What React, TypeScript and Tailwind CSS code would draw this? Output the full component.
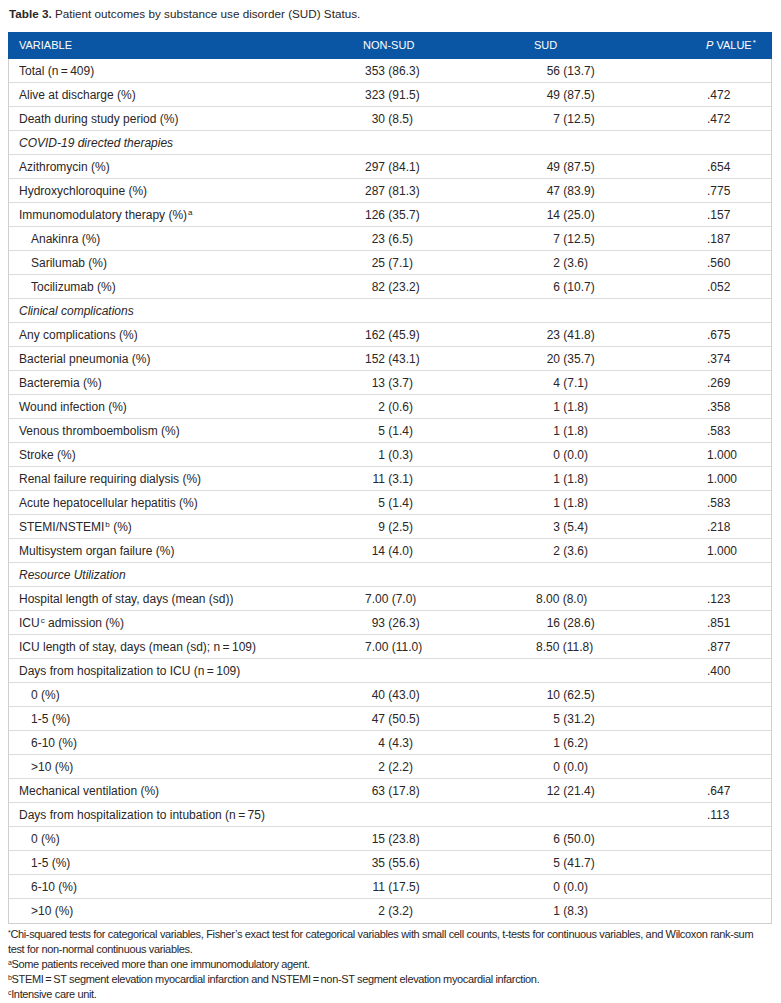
import React from 'react';

type Row =
  | { kind: 'section'; label: string }
  | {
      kind: 'data';
      label: React.ReactNode;
      indent?: boolean;
      non?: [string, string] | string;
      sud?: [string, string] | string;
      p?: string;
    };

const rows: Row[] = [
  { kind: 'data', label: 'Total (n\u2009=\u2009409)', non: ['353', '(86.3)'], sud: ['56', '(13.7)'] },
  { kind: 'data', label: 'Alive at discharge (%)', non: ['323', '(91.5)'], sud: ['49', '(87.5)'], p: '.472' },
  { kind: 'data', label: 'Death during study period (%)', non: ['30', '(8.5)'], sud: ['7', '(12.5)'], p: '.472' },
  { kind: 'section', label: 'COVID-19 directed therapies' },
  { kind: 'data', label: 'Azithromycin (%)', non: ['297', '(84.1)'], sud: ['49', '(87.5)'], p: '.654' },
  { kind: 'data', label: 'Hydroxychloroquine (%)', non: ['287', '(81.3)'], sud: ['47', '(83.9)'], p: '.775' },
  {
    kind: 'data',
    label: (
      <>
        Immunomodulatory therapy (%)<Sup>a</Sup>
      </>
    ),
    non: ['126', '(35.7)'],
    sud: ['14', '(25.0)'],
    p: '.157',
  },
  { kind: 'data', indent: true, label: 'Anakinra (%)', non: ['23', '(6.5)'], sud: ['7', '(12.5)'], p: '.187' },
  { kind: 'data', indent: true, label: 'Sarilumab (%)', non: ['25', '(7.1)'], sud: ['2', '(3.6)'], p: '.560' },
  { kind: 'data', indent: true, label: 'Tocilizumab (%)', non: ['82', '(23.2)'], sud: ['6', '(10.7)'], p: '.052' },
  { kind: 'section', label: 'Clinical complications' },
  { kind: 'data', label: 'Any complications (%)', non: ['162', '(45.9)'], sud: ['23', '(41.8)'], p: '.675' },
  { kind: 'data', label: 'Bacterial pneumonia (%)', non: ['152', '(43.1)'], sud: ['20', '(35.7)'], p: '.374' },
  { kind: 'data', label: 'Bacteremia (%)', non: ['13', '(3.7)'], sud: ['4', '(7.1)'], p: '.269' },
  { kind: 'data', label: 'Wound infection (%)', non: ['2', '(0.6)'], sud: ['1', '(1.8)'], p: '.358' },
  { kind: 'data', label: 'Venous thromboembolism (%)', non: ['5', '(1.4)'], sud: ['1', '(1.8)'], p: '.583' },
  { kind: 'data', label: 'Stroke (%)', non: ['1', '(0.3)'], sud: ['0', '(0.0)'], p: '1.000' },
  { kind: 'data', label: 'Renal failure requiring dialysis (%)', non: ['11', '(3.1)'], sud: ['1', '(1.8)'], p: '1.000' },
  { kind: 'data', label: 'Acute hepatocellular hepatitis (%)', non: ['5', '(1.4)'], sud: ['1', '(1.8)'], p: '.583' },
  {
    kind: 'data',
    label: (
      <>
        STEMI/NSTEMI<Sup>b</Sup> (%)
      </>
    ),
    non: ['9', '(2.5)'],
    sud: ['3', '(5.4)'],
    p: '.218',
  },
  { kind: 'data', label: 'Multisystem organ failure (%)', non: ['14', '(4.0)'], sud: ['2', '(3.6)'], p: '1.000' },
  { kind: 'section', label: 'Resource Utilization' },
  { kind: 'data', label: 'Hospital length of stay, days (mean (sd))', non: '7.00 (7.0)', sud: '8.00 (8.0)', p: '.123' },
  {
    kind: 'data',
    label: (
      <>
        ICU<Sup>c</Sup> admission (%)
      </>
    ),
    non: ['93', '(26.3)'],
    sud: ['16', '(28.6)'],
    p: '.851',
  },
  {
    kind: 'data',
    label: 'ICU length of stay, days (mean (sd); n\u2009=\u2009109)',
    non: '7.00 (11.0)',
    sud: '8.50 (11.8)',
    p: '.877',
  },
  { kind: 'data', label: 'Days from hospitalization to ICU (n\u2009=\u2009109)', p: '.400' },
  { kind: 'data', indent: true, label: '0 (%)', non: ['40', '(43.0)'], sud: ['10', '(62.5)'] },
  { kind: 'data', indent: true, label: '1-5 (%)', non: ['47', '(50.5)'], sud: ['5', '(31.2)'] },
  { kind: 'data', indent: true, label: '6-10 (%)', non: ['4', '(4.3)'], sud: ['1', '(6.2)'] },
  { kind: 'data', indent: true, label: '>10 (%)', non: ['2', '(2.2)'], sud: ['0', '(0.0)'] },
  { kind: 'data', label: 'Mechanical ventilation (%)', non: ['63', '(17.8)'], sud: ['12', '(21.4)'], p: '.647' },
  { kind: 'data', label: 'Days from hospitalization to intubation (n\u2009=\u200975)', p: '.113' },
  { kind: 'data', indent: true, label: '0 (%)', non: ['15', '(23.8)'], sud: ['6', '(50.0)'] },
  { kind: 'data', indent: true, label: '1-5 (%)', non: ['35', '(55.6)'], sud: ['5', '(41.7)'] },
  { kind: 'data', indent: true, label: '6-10 (%)', non: ['11', '(17.5)'], sud: ['0', '(0.0)'] },
  { kind: 'data', indent: true, label: '>10 (%)', non: ['2', '(3.2)'], sud: ['1', '(8.3)'] },
];

function Sup({ children }: { children: React.ReactNode }) {
  return <sup className="text-[8px] relative -top-[4px] ml-[1px]">{children}</sup>;
}

function NoteMark({ children }: { children: React.ReactNode }) {
  return <sup className="text-[7px] relative -top-[3px]">{children}</sup>;
}

function Value({ v, numWidth }: { v?: [string, string] | string; numWidth: 'non' | 'sud' }) {
  if (!v) return null;
  if (typeof v === 'string') return <span className="pl-[1px]">{v}</span>;
  return (
    <span className="whitespace-nowrap">
      <span className={`inline-block text-right ${numWidth === 'non' ? 'w-[21px]' : 'w-[25px]'}`}>{v[0]}</span>{' '}
      {v[1]}
    </span>
  );
}

const grid = 'grid grid-cols-[345px_171px_172px_1fr]';

export default function App() {
  return (
    <div className="min-h-screen bg-white text-[#2a2627]" style={{ fontFamily: '"Liberation Sans", Arial, sans-serif' }}>
      <div className="px-[8px] pt-[6px]">
        <p className="text-[11.7px] leading-[16px] mb-[10px] pl-[1px]">
          <span className="font-bold">Table 3.</span> Patient outcomes by substance use disorder (SUD) Status.
        </p>

        <div className="w-[764px] border-x border-b border-[#cfcfcf]">
          <div className={`${grid} h-[27px] items-center bg-[#0b56a4] text-white text-[11px] -mx-px`}>
            <div className="pl-[11px]">VARIABLE</div>
            <div className="pl-[10px]">NON-SUD</div>
            <div className="pl-[10px]">SUD</div>
            <div className="pl-[10px]">
              <span className="italic">P</span> VALUE<Sup>*</Sup>
            </div>
          </div>

          {rows.map((r, i) =>
            r.kind === 'section' ? (
              <div
                key={i}
                className={`h-[24px] flex items-center pl-[10px] italic text-[12px] ${
                  i === rows.length - 1 ? '' : 'border-b border-[#dcdcdc]'
                }`}
              >
                {r.label}
              </div>
            ) : (
              <div
                key={i}
                className={`${grid} h-[24px] items-center text-[12px] ${
                  i === rows.length - 1 ? '' : 'border-b border-[#dcdcdc]'
                }`}
              >
                <div className={r.indent ? 'pl-[22px]' : 'pl-[10px]'}>{r.label}</div>
                <div className="pl-[10px]">
                  <Value v={r.non} numWidth="non" />
                </div>
                <div className="pl-[10px]">
                  <Value v={r.sud} numWidth="sud" />
                </div>
                <div className="pl-[10px]">{r.p}</div>
              </div>
            )
          )}
        </div>

        <div className="pt-[3px] text-[11px] leading-[15px] tracking-[-0.35px] text-[#2a2627]">
          <p>
            <NoteMark>*</NoteMark>Chi-squared tests for categorical variables, Fisher’s exact test for categorical
            variables with small cell counts, t-tests for continuous variables, and Wilcoxon rank-sum
            <br />
            test for non-normal continuous variables.
          </p>
          <p>
            <NoteMark>a</NoteMark>Some patients received more than one immunomodulatory agent.
          </p>
          <p>
            <NoteMark>b</NoteMark>STEMI{'\u2009=\u2009'}ST segment elevation myocardial infarction and NSTEMI
            {'\u2009=\u2009'}non-ST segment elevation myocardial infarction.
          </p>
          <p>
            <NoteMark>c</NoteMark>Intensive care unit.
          </p>
        </div>
      </div>
    </div>
  );
}
